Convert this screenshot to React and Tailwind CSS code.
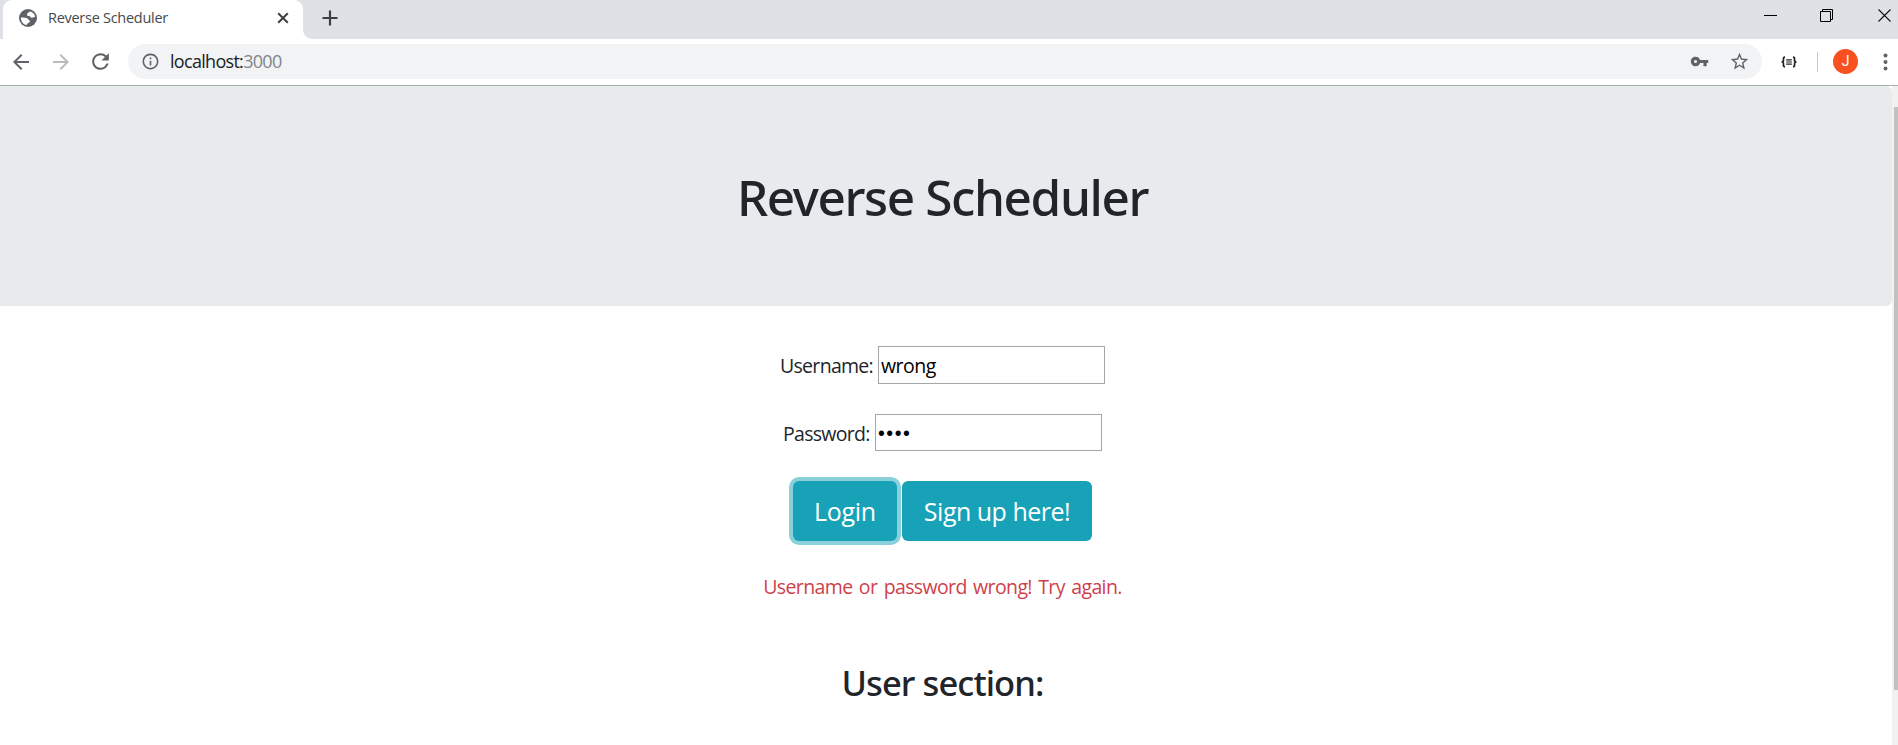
import { MdArrowBack, MdArrowForward, MdRefresh, MdInfoOutline, MdVpnKey, MdStarBorder } from "react-icons/md";

function Globe() {
  return (
    <svg viewBox="0 0 18 18" className="size-[18px] shrink-0">
      <circle cx="9" cy="9" r="9" fill="#5f6368" />
      <path d="M11.600 2.400C9.500 3.200 8.200 3.800 8 5.200c-.2 1.300.9 1.800 2.200 1.900 1 .1 1 1.400 2.100 1.700 1.400.3 2.100-.9 3.900-.7C16 5.500 14.300 3.400 11.600 2.400Z" fill="#fff" />
      <path d="M1.900 8.500c2.600.1 4.600.1 6.100.7 1.600.6 1 1.500 2.200 2 1 .4 1 1.500.2 2.100-.9.7-2.200.9-2.700 2.700C4.200 15.500 1.700 12.500 1.900 8.500Z" fill="#fff" />
    </svg>
  );
}

function TabStrip() {
  return (
    <div className="flex h-[39px] bg-[#dee1e6] pl-[3px]">
      <div className="flex h-[39px] w-[300px] items-center rounded-t-[9px] bg-white pb-[3px] pl-4 pr-[14px]">
        <Globe />
        <span className="ml-[11px] flex-1 whitespace-nowrap font-['Open_Sans',sans-serif] text-[14.5px] tracking-[-0.28px] text-[#45494d]">
          Reverse Scheduler
        </span>
        <svg viewBox="0 0 12 12" className="size-3" stroke="#3c4043" strokeWidth="2" fill="none">
          <path d="M1.200 1.200l9.600 9.600M10.800 1.200l-9.600 9.600" />
        </svg>
      </div>
      <svg viewBox="0 0 9 9" className="size-[9px] self-end" fill="#fff">
        <path d="M0 0v9h9A9 9 0 0 1 0 0Z" />
      </svg>
      <svg viewBox="0 0 16 16" className="ml-[10px] mt-[10px] size-4" stroke="#3c4043" strokeWidth="2.200" fill="none">
        <path d="M8 .5v15M.5 8h15" />
      </svg>
      <div className="ml-auto flex h-[30px] items-center pr-[7px]">
        <svg viewBox="0 0 13 13" className="size-[13px]" stroke="#000" fill="none">
          <path d="M0 6.500h13" />
        </svg>
        <svg viewBox="0 0 13 13" className="ml-[43px] size-[13px]" stroke="#000" strokeWidth="1" fill="none">
          <path d="M.5 2.500h10v10H.5ZM2.500 2.500v-2h10v10h-2" />
        </svg>
        <svg viewBox="0 0 13 13" className="ml-[45px] size-[13px]" stroke="#111" strokeWidth="1.100" fill="none">
          <path d="M.5.5l12 12M12.500.5l-12 12" />
        </svg>
      </div>
    </div>
  );
}

function Toolbar() {
  return (
    <div className="flex h-[47px] items-center border-b border-[#a9aeac] bg-white pb-px pl-[9px] pr-[10px] text-[#5f6368]">
      <MdArrowBack className="size-6 shrink-0" />
      <MdArrowForward className="ml-4 size-6 shrink-0 text-[#b9bbbe]" />
      <MdRefresh className="ml-[15px] size-[25px] shrink-0" />
      <div className="ml-[15px] flex h-[35px] w-[1634px] items-center rounded-full bg-[#f1f3f4] pl-[13px] pr-[12px]">
        <MdInfoOutline className="size-[19px] shrink-0" />
        <span className="ml-[10px] flex-1 font-['Open_Sans',sans-serif] text-[18px] tracking-[-0.7px] text-[#202124]">
          localhost:<span className="text-[#80868b]">3000</span>
        </span>
        <MdVpnKey className="size-[19px] shrink-0" />
        <MdStarBorder className="ml-5 size-[21px] shrink-0" />
      </div>
      <svg viewBox="0 0 16 12" className="ml-[19px] h-3 w-4 shrink-0" stroke="#202124" fill="none">
        <path d="M4 1.200C2 1.200 2.500 2.500 2.500 4S2 6 .6 6C2 6 2.500 6.500 2.500 8S2 10.800 4 10.800M12 1.200c2 0 1.500 1.300 1.500 2.800S14 6 15.400 6c-1.400 0-1.900.5-1.900 2s.5 2.800-1.500 2.800" strokeWidth="1.700" />
        <path d="M5.200 3.800h5.600M5.200 6h5.600M5.200 8.200h5.600" strokeWidth="1.200" />
      </svg>
      <div className="ml-5 h-5 w-px shrink-0 bg-[#c6c8cb]" />
      <div className="ml-[15px] flex size-[25px] shrink-0 items-center justify-center rounded-full bg-[#f9501f] font-[Roboto,sans-serif] text-[14px] text-white">
        J
      </div>
      <svg viewBox="0 0 5 18" className="ml-auto h-[18px] w-[5px] shrink-0" fill="#5f6368">
        <circle cx="2.500" cy="2.500" r="2" />
        <circle cx="2.500" cy="9" r="2" />
        <circle cx="2.500" cy="15.500" r="2" />
      </svg>
    </div>
  );
}

function Page() {
  return (
    <main className="flex-1 font-['Open_Sans',sans-serif] text-[19.5px] text-[#212529]">
      <header className="h-[220px] rounded-r-[6px] bg-[#e8ebee] pr-[7px] pt-[81px]">
        <h1 className="text-center font-['Noto_Sans',sans-serif] text-[49.5px] font-medium leading-[60px] tracking-[-1.4px]">
          Reverse Scheduler
        </h1>
      </header>
      <div className="flex flex-col items-center pr-[7px] pt-10">
        <label className="flex h-[38px] items-center tracking-[-0.7px]">
          <span className="w-[98px] whitespace-nowrap pt-px">Username:</span>
          <input
            defaultValue="wrong"
            className="h-[38px] w-[227px] border border-[#a6a6a6] bg-white px-[2px] pt-px tracking-[-0.5px] text-black outline-none"
          />
        </label>
        <label className="mt-[30px] flex h-[37px] items-center tracking-[-0.7px]">
          <span className="w-[92px] whitespace-nowrap pt-[2px]">Password:</span>
          <input
            defaultValue="••••"
            className="h-[37px] w-[227px] border border-[#a6a6a6] bg-white px-[2px] pt-[2px] font-['Liberation_Sans',sans-serif] tracking-[1.5px] text-black outline-none"
          />
        </label>
        <div className="mt-[30px] flex gap-[5px] text-[25px] text-white">
          <button className="h-[60px] w-[104px] rounded-[6px] bg-[#17a2b8] pt-px tracking-[-0.3px] ring-4 ring-[#8bd0db]">Login</button>
          <button className="h-[60px] w-[190px] rounded-[6px] bg-[#17a2b8] pt-px tracking-[-0.5px]">Sign up here!</button>
        </div>
        <p className="mt-[31px] leading-[30px] tracking-[-0.62px] text-[#cf3f4b] [word-spacing:1.9px]">
          Username or password wrong! Try again.
        </p>
        <h2 className="mt-[60px] font-['Noto_Sans',sans-serif] text-[34.5px] font-medium leading-[42px] tracking-[-0.9px]">
          User section:
        </h2>
      </div>
    </main>
  );
}

export default function App() {
  return (
    <div className="flex h-[745px] w-[1898px] flex-col overflow-hidden bg-white">
      <TabStrip />
      <Toolbar />
      <div className="flex min-h-0 flex-1">
        <Page />
        <div className="flex w-[6px] flex-col bg-[#f1f1f1] pl-[2px] pt-[21px]">
          <div className="h-[583px] bg-[#c1c1c1]" />
        </div>
      </div>
    </div>
  );
}
